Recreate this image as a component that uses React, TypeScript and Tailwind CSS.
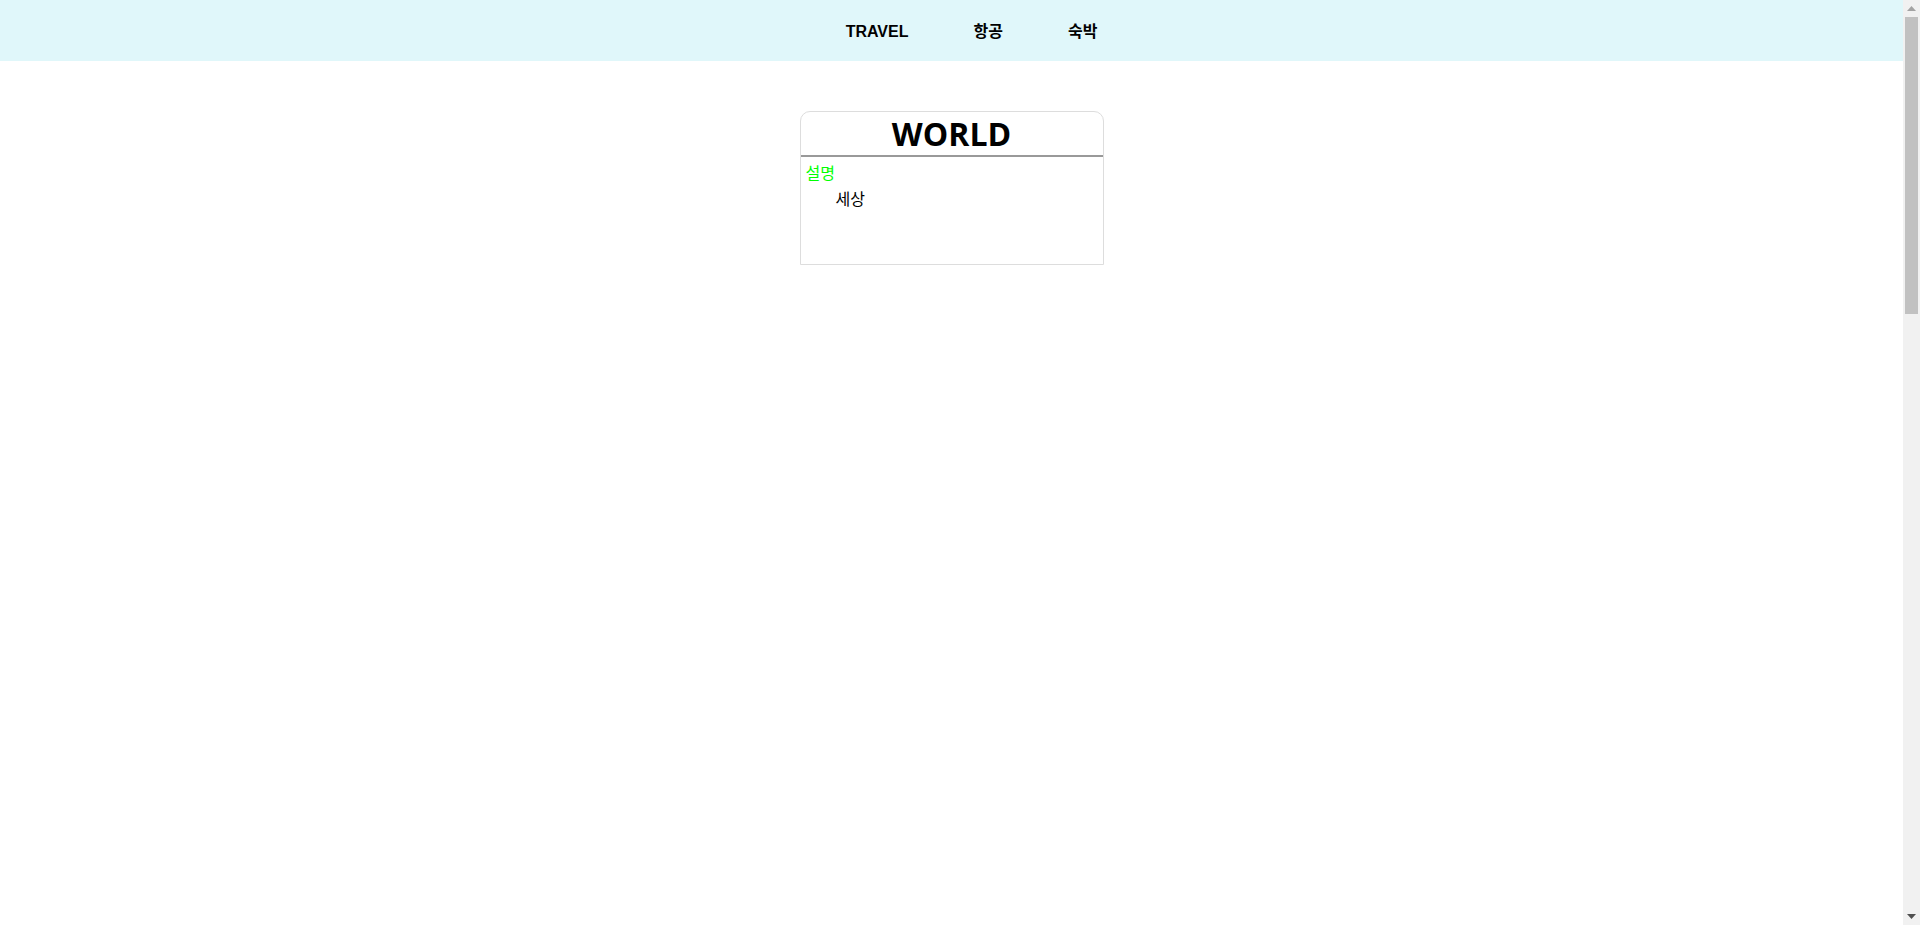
export default function App() {
  const menus = ["TRAVEL", "항공", "숙박"];

  return (
    <div className="flex h-[925px] overflow-hidden bg-white text-black">
      <div className="flex-1">
        {/* top navigation */}
        <nav className="h-[61px] bg-[#e0f7fa]">
          <ul className="flex h-full items-center justify-center gap-[65px] pl-10 pt-[2px] font-['Liberation_Sans','Noto_Sans_CJK_KR',sans-serif] text-[16px] font-bold">
            {menus.map((menu) => (
              <li key={menu}>
                <a href="#">{menu}</a>
              </li>
            ))}
          </ul>
        </nav>

        <main className="pt-[50px]">
          <section className="mx-auto h-[154px] w-[304px] rounded-t-[10px] border border-[#dddddd]">
            <h1 className="border-b-2 border-[#999999] pt-[1px] text-center font-['Open_Sans','Noto_Sans_CJK_KR',sans-serif] text-[32px] font-bold leading-[42px]">
              WORLD
            </h1>
            <dl className="px-[5px] pt-[2px] font-['Noto_Sans_CJK_KR',sans-serif] text-[16px] leading-[26px]">
              <dt className="text-[#00ff00]">설명</dt>
              <dd className="ml-[30px]">세상</dd>
            </dl>
          </section>
        </main>
      </div>

      {/* page scrollbar */}
      <aside className="flex w-[17px] flex-col bg-[#f1f1f1]">
        <div className="flex h-[17px] items-center justify-center">
          <svg width="9" height="5" viewBox="0 0 9 5">
            <path d="M4.5 0L9 5H0Z" fill="#a3a3a3" />
          </svg>
        </div>
        <div className="flex-1 px-[2px]">
          <div className="h-[297px] bg-[#c1c1c1]" />
        </div>
        <div className="flex h-[17px] items-center justify-center">
          <svg width="9" height="5" viewBox="0 0 9 5">
            <path d="M0 0H9L4.5 5Z" fill="#505050" />
          </svg>
        </div>
      </aside>
    </div>
  );
}
